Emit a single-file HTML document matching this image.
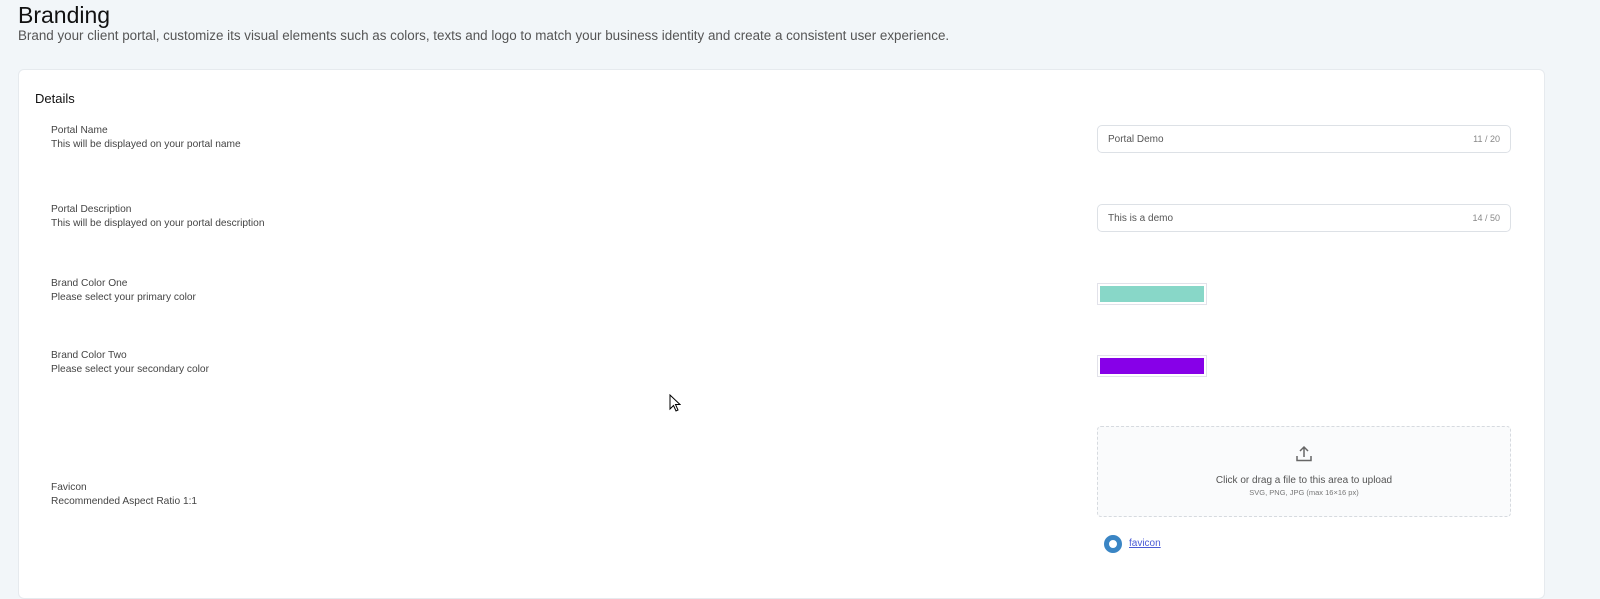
<!DOCTYPE html>
<html><head><style>
*{box-sizing:border-box;margin:0;padding:0}
body{width:1600px;height:582px;background:#f2f6f9;font-family:"Liberation Sans",sans-serif;position:relative;overflow:hidden;color:#111}
.abs{position:absolute}
h1{position:absolute;left:18px;top:2px;font-size:23px;font-weight:400;color:#111}
.sub{left:18px;top:28px;font-size:13.4px;color:#555}
.card{left:18px;top:69px;width:1527px;height:530px;background:#fff;border:1px solid #e6eaee;border-radius:6px}
.det{left:35px;top:91px;font-size:13px;color:#111}
.lbl{left:51px;font-size:10.2px;color:#444;line-height:14px}
.inp{left:1097px;width:414px;height:28px;border:1px solid #dde1e6;border-radius:5px;font-size:10px;color:#555;padding:0 10px;display:flex;align-items:center;justify-content:space-between}
.inp span{color:#888;font-size:9px}
.sw{left:1097px;width:110px;height:22px;border:1px solid #e2e2ea;padding:2px}
.sw div{width:100%;height:100%}
.up{left:1097px;top:426px;width:414px;height:91px;border:1px dashed #d6dadf;border-radius:4px;background:#fafbfc;text-align:center}
</style></head><body>
<h1>Branding</h1>
<div class="abs sub">Brand your client portal, customize its visual elements such as colors, texts and logo to match your business identity and create a consistent user experience.</div>
<div class="abs card"></div>
<div class="abs det">Details</div>
<div class="abs lbl" style="top:124px">Portal Name<br>This will be displayed on your portal name</div>
<div class="abs lbl" style="top:203px">Portal Description<br>This will be displayed on your portal description</div>
<div class="abs lbl" style="top:277px">Brand Color One<br>Please select your primary color</div>
<div class="abs lbl" style="top:349px">Brand Color Two<br>Please select your secondary color</div>
<div class="abs lbl" style="top:481px">Favicon<br>Recommended Aspect Ratio 1:1</div>
<div class="abs inp" style="top:125px">Portal Demo<span>11 / 20</span></div>
<div class="abs inp" style="top:204px">This is a demo<span>14 / 50</span></div>
<div class="abs sw" style="top:283px"><div style="background:#88d7c8"></div></div>
<div class="abs sw" style="top:355px"><div style="background:#8700e8"></div></div>
<div class="abs up">
<svg width="20" height="20" viewBox="0 0 20 20" style="margin-top:17px" fill="none" stroke="#666" stroke-width="1.5"><path d="M10 13V3M6 7l4-4 4 4M3 12v4.5h14V12"/></svg>
<div style="font-size:10px;color:#555;margin-top:6px">Click or drag a file to this area to upload</div>
<div style="font-size:7.5px;color:#777;margin-top:2px">SVG, PNG, JPG (max 16×16 px)</div>
</div>
<div class="abs" style="left:1104px;top:535px;width:18px;height:18px;border-radius:50%;border:5px solid #3a85c4"></div>
<div class="abs" style="left:1129px;top:538px;font-size:10px;color:#4a5bd6;text-decoration:underline">favicon</div>
<svg class="abs" style="left:669px;top:394px" width="12" height="18" viewBox="0 0 12 18"><path d="M1 1v14l3.5-3.5 2.5 5.5 2-1-2.5-5.5H11z" fill="#fff" stroke="#000"/></svg>
</body></html>
